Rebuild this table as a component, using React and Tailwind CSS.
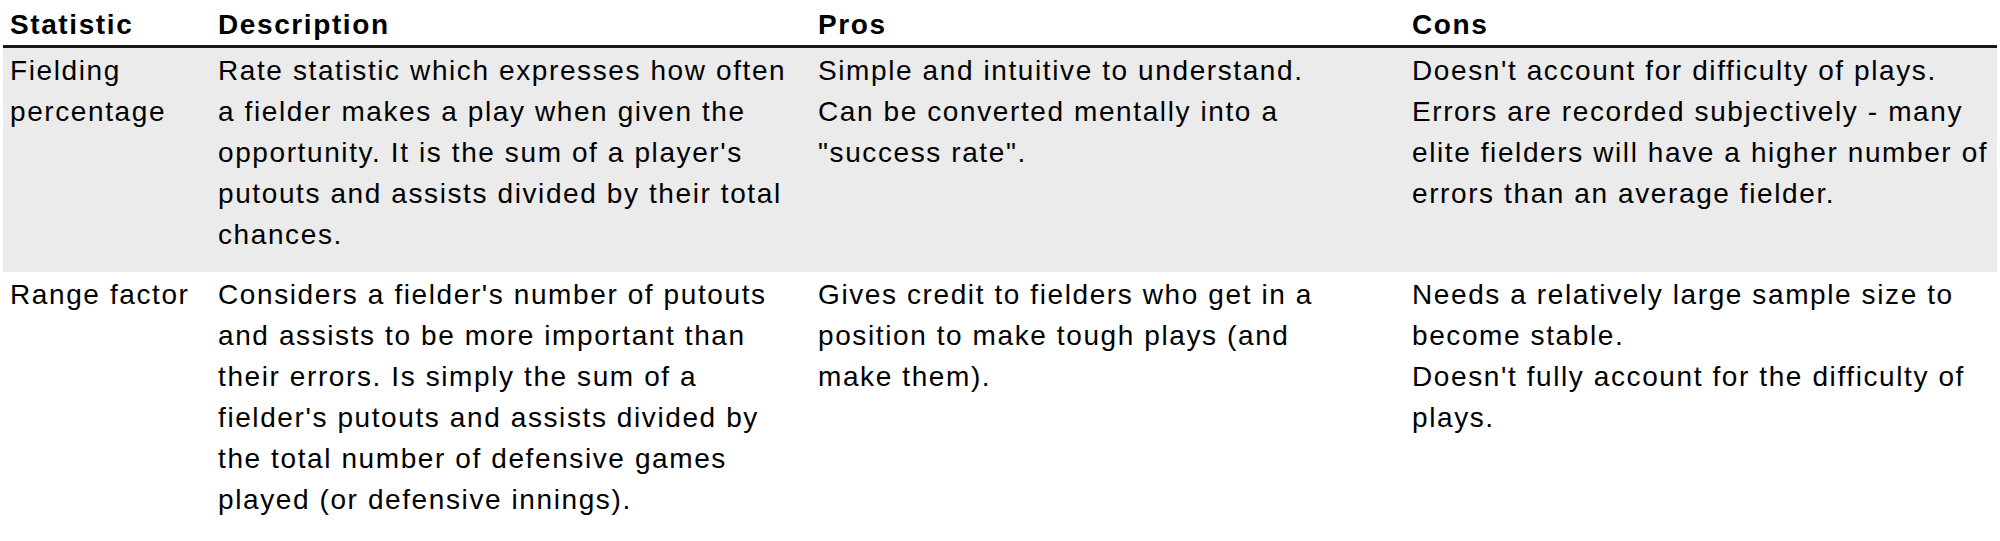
const rows = [
  {
    stat: 'Fielding percentage',
    desc: "Rate statistic which expresses how often a fielder makes a play when given the opportunity. It is the sum of a player's putouts and assists divided by their total chances.",
    pros: ['Simple and intuitive to understand.', 'Can be converted mentally into a "success rate".'],
    cons: ["Doesn't account for difficulty of plays.", 'Errors are recorded subjectively - many elite fielders will have a higher number of errors than an average fielder.'],
    shaded: true,
  },
  {
    stat: 'Range factor',
    desc: "Considers a fielder's number of putouts and assists to be more important than their errors. Is simply the sum of a fielder's putouts and assists divided by the total number of defensive games played (or defensive innings).",
    pros: ['Gives credit to fielders who get in a position to make tough plays (and make them).'],
    cons: ['Needs a relatively large sample size to become stable.', "Doesn't fully account for the difficulty of plays."],
    shaded: false,
  },
]

export default function App() {
  return (
    <div className="w-[2000px] h-[541px] bg-white text-black font-['Liberation_Sans',Arial,sans-serif] text-[28px] leading-[41px] tracking-[1.6px]">
      <table className="w-[1994px] ml-[3px] border-collapse table-fixed">
        <colgroup>
          <col className="w-[207px]" />
          <col className="w-[600px]" />
          <col className="w-[594px]" />
          <col className="w-[593px]" />
        </colgroup>
        <thead>
          <tr className="border-b-[3px] border-[#1a1a1a]">
            <th className="text-left font-bold align-top pl-[7px] pt-[4px]">Statistic</th>
            <th className="text-left font-bold align-top pl-[8px] pt-[4px]">Description</th>
            <th className="text-left font-bold align-top pl-[8px] pt-[4px]">Pros</th>
            <th className="text-left font-bold align-top pl-[8px] pt-[4px]">Cons</th>
          </tr>
        </thead>
        <tbody>
          {rows.map((r) => (
            <tr key={r.stat} className={r.shaded ? 'bg-[#ebebeb]' : ''}>
              <td className="align-top pl-[7px] pr-[2px] pt-[2px] pb-[17px]">{r.stat}</td>
              <td className="align-top pl-[8px] pr-[2px] pt-[2px] pb-[17px]">{r.desc}</td>
              <td className="align-top pl-[8px] pr-[44px] pt-[2px] pb-[17px]">
                {r.pros.map((p) => (
                  <div key={p}>{p}</div>
                ))}
              </td>
              <td className="align-top pl-[8px] pr-0 pt-[2px] pb-[17px]">
                {r.cons.map((c) => (
                  <div key={c}>{c}</div>
                ))}
              </td>
            </tr>
          ))}
        </tbody>
      </table>
    </div>
  )
}
